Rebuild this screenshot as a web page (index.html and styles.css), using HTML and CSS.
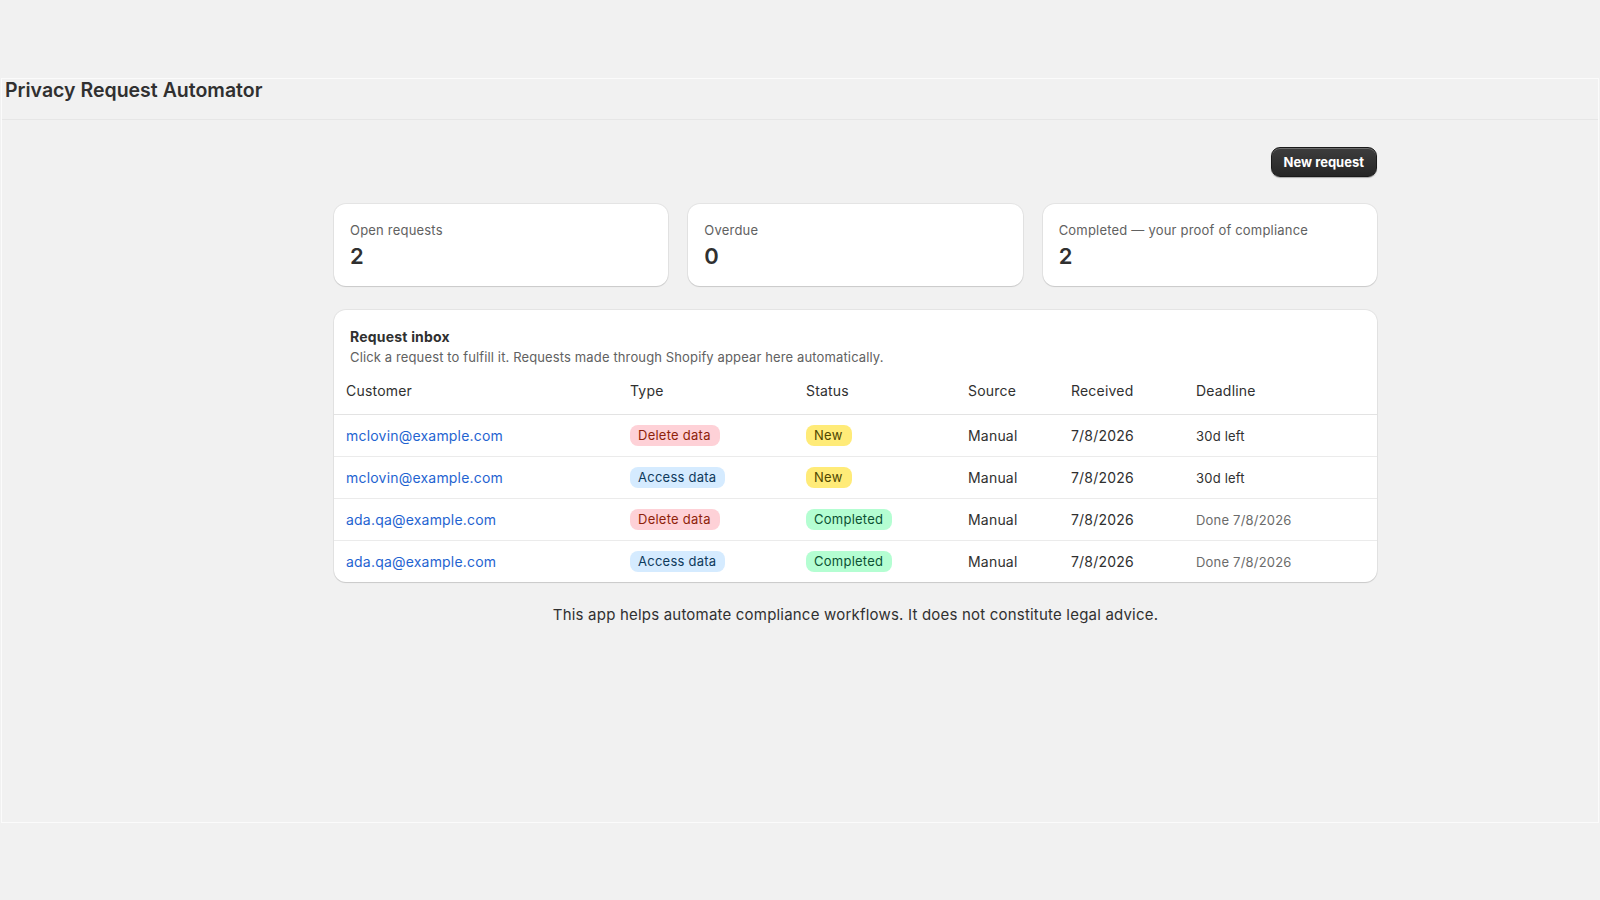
FILE: index.html
```html
<!DOCTYPE html>
<html lang="en">
<head>
  <meta charset="UTF-8" />
  <meta name="viewport" content="width=device-width, initial-scale=1.0" />
  <title>Privacy Request Automator</title>
  <link rel="stylesheet" href="styles.css">
</head>
<body>

  <div class="frame">
    <header class="titlebar">
      <h1>Privacy Request Automator</h1>
    </header>

    <main class="page">
      <div class="actions">
        <button class="btn-primary">New request</button>
      </div>

      <div class="stats">
        <div class="card stat">
          <div class="stat-label">Open requests</div>
          <div class="stat-value">2</div>
        </div>
        <div class="card stat">
          <div class="stat-label">Overdue</div>
          <div class="stat-value">0</div>
        </div>
        <div class="card stat">
          <div class="stat-label">Completed — your proof of compliance</div>
          <div class="stat-value">2</div>
        </div>
      </div>

      <div class="card inbox">
        <div class="inbox-head">
          <h2>Request inbox</h2>
          <p>Click a request to fulfill it. Requests made through Shopify appear here automatically.</p>
        </div>

        <table class="requests">
          <thead>
            <tr>
              <th class="col-customer">Customer</th>
              <th class="col-type">Type</th>
              <th class="col-status">Status</th>
              <th class="col-source">Source</th>
              <th class="col-received">Received</th>
              <th>Deadline</th>
            </tr>
          </thead>
          <tbody>
            <tr>
              <td><a href="#">mclovin@example.com</a></td>
              <td><span class="badge badge-critical">Delete data</span></td>
              <td><span class="badge badge-attention">New</span></td>
              <td>Manual</td>
              <td>7/8/2026</td>
              <td class="deadline">30d left</td>
            </tr>
            <tr>
              <td><a href="#">mclovin@example.com</a></td>
              <td><span class="badge badge-info">Access data</span></td>
              <td><span class="badge badge-attention">New</span></td>
              <td>Manual</td>
              <td>7/8/2026</td>
              <td class="deadline">30d left</td>
            </tr>
            <tr>
              <td><a href="#">ada.qa@example.com</a></td>
              <td><span class="badge badge-critical">Delete data</span></td>
              <td><span class="badge badge-success">Completed</span></td>
              <td>Manual</td>
              <td>7/8/2026</td>
              <td class="deadline done">Done 7/8/2026</td>
            </tr>
            <tr>
              <td><a href="#">ada.qa@example.com</a></td>
              <td><span class="badge badge-info">Access data</span></td>
              <td><span class="badge badge-success">Completed</span></td>
              <td>Manual</td>
              <td>7/8/2026</td>
              <td class="deadline done">Done 7/8/2026</td>
            </tr>
          </tbody>
        </table>
      </div>

      <p class="footnote">This app helps automate compliance workflows. It does not constitute legal advice.</p>
    </main>
  </div>

</body>
</html>
```

FILE: styles.css
```css
body {
  margin: 0;
  background-color: #f1f1f1;
  color: #303030;
  font-family: Inter, 'Noto Sans', sans-serif;
  font-size: 14px;
  line-height: 20px;
  letter-spacing: 0.2px;
}
.frame {
  margin: 78px 1px 0;
  height: 743px;
  border: 1px solid #fbfbfb;
}
.titlebar {
  height: 40px;
  border-bottom: 1px solid #e6e6e6;
  padding: 0 3px;
}
.titlebar h1 {
  margin: 0;
  font-size: 19.5px;
  line-height: 22px;
  font-weight: 600;
  letter-spacing: 0;
  color: #303030;
}
.page {
  width: 1043px;
  margin-left: 332px;
  padding-top: 27px;
}
.actions {
  display: flex;
  justify-content: flex-end;
  margin-bottom: 27px;
}
.btn-primary {
  font-family: inherit;
  font-size: 13px;
  font-weight: 650;
  line-height: 20px;
  letter-spacing: 0;
  color: #fff;
  background: linear-gradient(#3d3d3d, #262626);
  border: 1px solid #1a1a1a;
  border-radius: 9px;
  padding: 4px 12px;
  box-shadow: inset 0 1px 0 rgba(255, 255, 255, 0.25), 0 1px 1px rgba(0, 0, 0, 0.3);
}
.card {
  background-color: #fff;
  border-radius: 12px;
  box-shadow: 0 0 0 1px rgba(0, 0, 0, 0.05), 0 1px 1px rgba(0, 0, 0, 0.12);
}
.stats {
  display: grid;
  grid-template-columns: repeat(3, 1fr);
  gap: 20px;
  margin-bottom: 24px;
}
.stat {
  padding: 16px;
}
.stat-label {
  font-size: 13px;
  color: #616161;
}
.stat-value {
  margin-top: 2px;
  font-size: 22px;
  line-height: 28px;
  font-weight: 600;
}
.inbox {
  overflow: hidden;
}
.inbox-head {
  padding: 17px 16px 0;
}
.inbox-head h2 {
  margin: 0;
  font-size: 14px;
  font-weight: 650;
}
.inbox-head p {
  margin: 0;
  font-size: 13px;
  letter-spacing: 0.13px;
  color: #616161;
}
.requests {
  width: 100%;
  border-collapse: collapse;
  table-layout: fixed;
}
.requests th {
  text-align: left;
  font-weight: 400;
  padding: 14px 12px 13px;
  border-bottom: 1px solid #e3e3e3;
}
.requests td {
  height: 41px;
  padding: 0 12px;
  vertical-align: middle;
}
.requests tbody tr + tr td {
  border-top: 1px solid #ebebeb;
}
.col-customer { width: 260px; }
.col-type { width: 152px; }
.col-status { width: 138px; }
.col-source { width: 79px; }
.col-received { width: 101px; }
.requests a {
  color: #1f64d1;
  text-decoration: none;
}
.deadline {
  font-size: 13px;
}
.deadline.done {
  color: #6b6b6b;
}
.badge {
  display: inline-block;
  font-size: 13px;
  line-height: 21px;
  letter-spacing: 0.25px;
  padding: 0 9px 0 8px;
  border-radius: 8px;
}
.badge-critical {
  background-color: #fed1d7;
  color: #8e1f0b;
}
.badge-info {
  background-color: #d5ebff;
  color: #0e3a5c;
}
.badge-attention {
  background-color: #ffeb78;
  color: #4f4700;
}
.badge-success {
  background-color: #b4fed2;
  color: #0c5132;
}
.footnote {
  margin: 23px 0 0;
  font-size: 15px;
  text-align: center;
}
```
